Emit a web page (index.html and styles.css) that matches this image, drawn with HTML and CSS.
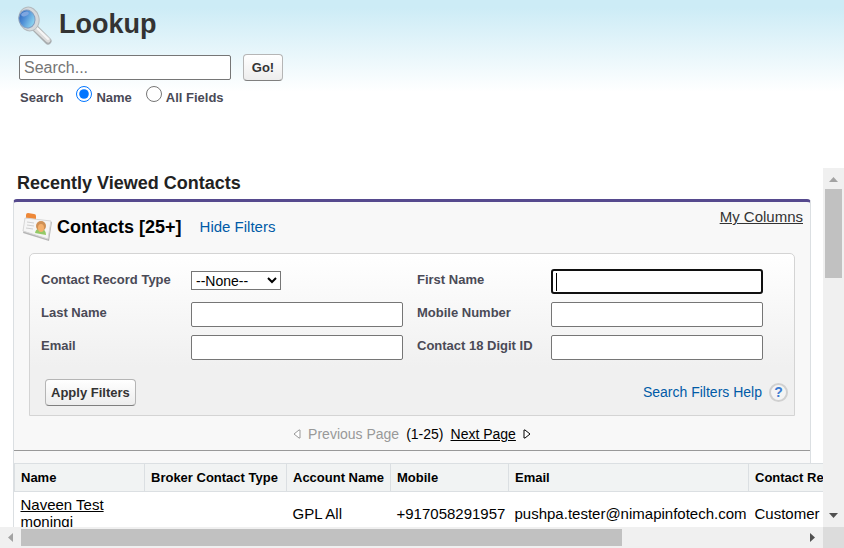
FILE: index.html
```html
<!DOCTYPE html>
<html lang="en">
<head>
<meta charset="utf-8">
<title>Lookup</title>
<link rel="stylesheet" href="styles.css">
</head>
<body>
<header class="search-pane">
  <div class="title-row">
    <svg class="title-icon" viewBox="0 0 38 40" aria-hidden="true">
      <defs>
        <linearGradient id="lens" x1="0" y1="0" x2="1" y2="1">
          <stop offset="0" stop-color="#2459b5"/>
          <stop offset=".4" stop-color="#4f8fd6"/>
          <stop offset="1" stop-color="#a5f0fa"/>
        </linearGradient>
      </defs>
      <path d="M19 22L32 35" stroke="#a9adaf" stroke-width="7" stroke-linecap="round"/>
      <path d="M18 21L32 34" stroke="#dcdcdc" stroke-width="5" stroke-linecap="round"/>
      <path d="M20 21L32 33" stroke="#f6f6f6" stroke-width="2" stroke-linecap="round"/>
      <ellipse cx="13" cy="13" rx="10" ry="12" transform="rotate(-15 13 13)" fill="#d5d9dc" stroke="#b3b9bd"/>
      <ellipse cx="11" cy="13" rx="8" ry="9" transform="rotate(-15 11 13)" fill="url(#lens)" stroke="#7f9bc0"/>
      <ellipse cx="9" cy="8" rx="4" ry="2" transform="rotate(-20 9 8)" fill="#7ea6e0"/>
    </svg>
    <h1>Lookup</h1>
  </div>
  <form class="search-form">
    <div class="search-row">
      <input class="text-box search-box" type="text" placeholder="Search..." aria-label="Search">
      <button class="button go" type="button">Go!</button>
    </div>
    <fieldset class="scope">
      <legend class="scope-legend">Search</legend>
      <input type="radio" name="scope" id="scope-name" checked>
      <label for="scope-name">Name</label>
      <input type="radio" name="scope" id="scope-all">
      <label for="scope-all">All Fields</label>
    </fieldset>
  </form>
</header>

<div class="frame">
  <main class="results">
    <h2>Recently Viewed Contacts</h2>
    <section class="panel">
      <div class="panel-head">
        <svg class="contacts-icon" viewBox="0 0 30 30" aria-hidden="true">
          <path d="M4 3q0-2 2-2l6 1q2 0 2 2v4H4z" fill="#ee8838"/>
          <path d="M4 8l26 2-3 19L1 21z" fill="#b5b5b5"/>
          <path d="M3 6l26 3-3 18L1 19z" fill="#f5f5f5" stroke="#d6d6d6"/>
          <path d="M5 10l7 1M5 13l7 1M4 16l7 1" stroke="#d0d0d0" stroke-width="1"/>
          <path d="M13 21q1-5 6-4 5 0 5 6z" fill="#94c967"/>
          <circle cx="19" cy="14" r="5" fill="#cf9055"/>
          <ellipse cx="19" cy="16" rx="3" ry="4" fill="#f5b06c"/>
        </svg>
        <h3>Contacts [25+]</h3>
        <a class="link" href="#filters">Hide Filters</a>
        <a class="columns-link" href="#columns">My Columns</a>
      </div>
      <form class="filters" id="filters">
        <div class="fields">
          <label for="record-type">Contact Record Type</label>
          <select id="record-type"><option>--None--</option></select>
          <label for="first-name">First Name</label>
          <input class="text-box" type="text" id="first-name" autofocus>
          <label for="last-name">Last Name</label>
          <input class="text-box" type="text" id="last-name">
          <label for="mobile">Mobile Number</label>
          <input class="text-box" type="text" id="mobile">
          <label for="email">Email</label>
          <input class="text-box" type="text" id="email">
          <label for="digit-id">Contact 18 Digit ID</label>
          <input class="text-box" type="text" id="digit-id">
        </div>
        <div class="filter-actions">
          <button class="button" type="button">Apply Filters</button>
          <a class="help" href="#help">Search Filters Help <span class="help-icon">?</span></a>
        </div>
      </form>
      <nav class="pager" aria-label="Pages">
        <svg class="page-arrow" viewBox="0 0 8 10" aria-hidden="true"><path d="M7 1v8L6 9 1 5l5-4z" fill="#fff" stroke="#999"/></svg>
        <span class="previous">Previous Page</span>
        <span>(1-25)</span>
        <a href="#next">Next Page</a>
        <svg class="page-arrow" viewBox="0 0 8 10" aria-hidden="true"><path d="M1 1v8h1l5-4-5-4z" fill="#fff" stroke="#000"/></svg>
      </nav>
      <table class="contacts">
        <colgroup>
          <col class="col-name"><col class="col-broker"><col class="col-account"><col class="col-mobile"><col class="col-email"><col class="col-record">
        </colgroup>
        <thead>
          <tr><th>Name</th><th>Broker Contact Type</th><th>Account Name</th><th>Mobile</th><th>Email</th><th>Contact Record Type</th></tr>
        </thead>
        <tbody>
          <tr><td><a href="#contact">Naveen Test moningi</a></td><td></td><td>GPL All</td><td>+917058291957</td><td>pushpa.tester@nimapinfotech.com</td><td>Customer</td></tr>
        </tbody>
      </table>
    </section>
  </main>
  <div class="scrollbar vertical" aria-hidden="true">
    <svg class="cap" viewBox="0 0 21 21"><path d="M6 14h9l-4.500-5z" fill="#a3a3a3"/></svg>
    <div class="track"><div class="thumb"></div></div>
    <svg class="cap" viewBox="0 0 21 21"><path d="M6 7h9l-4.500 5z" fill="#505050"/></svg>
  </div>
  <div class="scrollbar horizontal" aria-hidden="true">
    <svg class="cap" viewBox="0 0 21 21"><path d="M13 6v9l-5-4.500z" fill="#a3a3a3"/></svg>
    <div class="track"><div class="thumb"></div></div>
    <svg class="cap" viewBox="0 0 21 21"><path d="M8 6v9l5-4.500z" fill="#505050"/></svg>
  </div>
  <div class="corner"></div>
</div>
</body>
</html>
```
FILE: styles.css
```css
* { box-sizing: border-box; }
body {
  margin: 0;
  height: 100vh;
  display: flex;
  flex-direction: column;
  overflow: hidden;
  background: #fff;
  color: #000;
  font: 15px/17px "Liberation Sans", Arial, sans-serif;
}
h1, h2, h3 { margin: 0; }
a { color: #000; }
svg { display: block; flex: none; }

.search-pane {
  flex: none;
  padding: 6px 19px 60px;
  background: linear-gradient(#cdecf6 0, #cdecf6 8px, #fff 92px);
}
.title-row { display: flex; gap: 5px; margin-left: -3px; height: 48px; }
.title-icon { width: 38px; height: 40px; }
h1 { font-size: 27px; line-height: 36px; color: #333; }
.search-row { display: flex; align-items: center; gap: 12px; }
.text-box {
  width: 212px;
  height: 25px;
  padding: 1px 4px;
  border: 1px solid #767676;
  border-radius: 2px;
  background: #fff;
  font: 16px "Liberation Sans", Arial, sans-serif;
}
.text-box::placeholder { color: #757575; }
.button {
  height: 27px;
  padding: 0 5px;
  border: 1px solid #b5b5b5;
  border-bottom-color: #7f7f7f;
  border-radius: 4px;
  background: linear-gradient(#fff, #ededed);
  color: #333;
  font: bold 13px "Liberation Sans", Arial, sans-serif;
}
.go { min-width: 40px; }
.scope {
  display: flex;
  align-items: center;
  margin: 0;
  padding: 3px 1px 0;
  border: 0;
  color: #4a4a56;
  font-size: 13px;
  font-weight: bold;
  line-height: 21px;
}
.scope-legend { float: left; padding: 3px 0 0; margin-right: 13px; }
.scope label { margin-right: 14px; padding-top: 3px; }
.scope input { width: 16px; height: 16px; margin: 0 4px 4px 0; }

.frame {
  flex: 1;
  min-height: 0;
  display: grid;
  grid-template: minmax(0, 1fr) 21px / minmax(0, 1fr) 21px;
}
.results { overflow: hidden; padding: 4px 12px 0 13px; }
h2 { padding-left: 4px; font-size: 18px; line-height: 22px; color: #222; margin-bottom: 5px; }
.panel {
  border: 1px solid #dbdfe2;
  border-top: 3px solid #564a8e;
  border-radius: 4px 4px 0 0;
  background: #f8f8f8;
}
.panel-head { display: flex; align-items: center; padding: 0 7px 2px 8px; height: 51px; }
.contacts-icon { width: 30px; height: 30px; }
h3 { margin: 0 18px 0 5px; font-size: 18px; line-height: 24px; }
.link { color: #015ba7; text-decoration: none; }
.columns-link { margin: 0 0 20px auto; color: #333; }
.filters {
  margin: 0 15px;
  padding: 15px 6px 9px 11px;
  border: 1px solid #d4d4d4;
  border-radius: 5px 5px 0 0;
  background: linear-gradient(#fff, #f0f0f0 70%);
}
.fields {
  display: grid;
  grid-template-columns: 150px 226px 134px 212px;
  row-gap: 8px;
  color: #4a4a56;
  font-size: 13px;
  font-weight: bold;
}
.fields label { padding-top: 2px; }
select {
  width: 90px;
  height: 19px;
  margin-top: 2px;
  border: 1px solid #767676;
  border-radius: 0;
  background: #fff;
  font: 14px "Liberation Sans", Arial, sans-serif;
}
.fields .text-box:focus {
  outline: 0;
  border: 2px solid #101010;
  border-radius: 3px;
  background: linear-gradient(#000, #000) 3px center / 1px 18px no-repeat #fff;
  caret-color: transparent;
}
.filter-actions { display: flex; align-items: center; justify-content: space-between; margin-top: 19px; padding-left: 4px; }
.help { display: flex; align-items: center; gap: 7px; font-size: 14px; color: #015ba7; text-decoration: none; }
.help-icon {
  width: 19px;
  height: 19px;
  border: 2px solid #d0d0d0;
  border-radius: 50%;
  background: #f4f4f4;
  color: #3b7bd0;
  font-weight: bold;
  line-height: 15px;
  text-align: center;
}
.pager {
  display: flex;
  align-items: center;
  justify-content: center;
  gap: 7px;
  height: 35px;
  padding-top: 2px;
  border-bottom: 1px solid #999;
  font-size: 14px;
}
.page-arrow { width: 8px; height: 10px; }
.previous { color: #999; }
.contacts {
  width: 900px;
  margin-top: 12px;
  border-collapse: collapse;
  table-layout: fixed;
  background: #fff;
}
.col-name { width: 130px; }
.col-broker { width: 142px; }
.col-account { width: 104px; }
.col-mobile { width: 118px; }
.col-email { width: 240px; }
.contacts th {
  height: 28px;
  padding: 0 6px;
  border: 1px solid #dbdfe2;
  background: #f1f3f3;
  font-size: 13px;
  text-align: left;
  white-space: nowrap;
}
.contacts td { height: 42px; padding: 4px 6px; }

.scrollbar { display: flex; background: #f0f0f0; }
.vertical { flex-direction: column; }
.cap { width: 21px; height: 21px; }
.track { flex: 1; display: flex; min-width: 0; min-height: 0; }
.vertical .track { flex-direction: column; padding: 0 2px; }
.horizontal .track { padding: 2px 0; }
.thumb { background: #c1c1c1; }
.vertical .thumb { height: 28%; }
.horizontal .thumb { width: 77%; }
.corner { background: #dcdcdc; }
```
